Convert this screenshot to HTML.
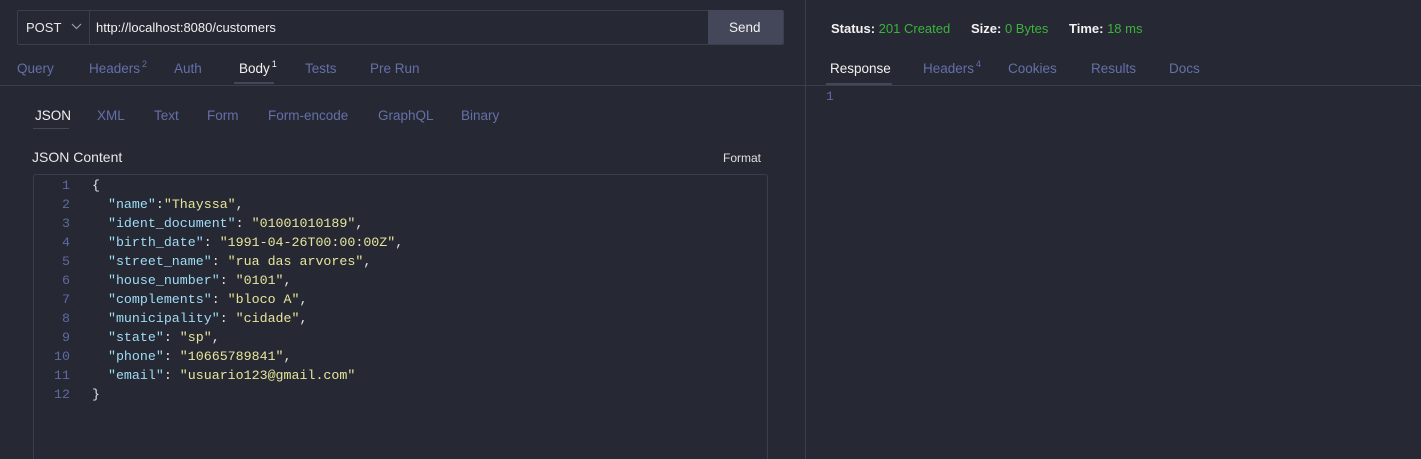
<!DOCTYPE html>
<html style="overflow:hidden;height:459px"><head><style>
body{margin:0;width:1421px;height:459px;background:#262833;font-family:"Liberation Sans",sans-serif;overflow:hidden;position:relative;color:#c5c8d4}
.a{position:absolute}
.tab{position:absolute;font-size:13.5px;color:#6470a8;top:61px;line-height:16px}
.sub{position:absolute;font-size:13.5px;color:#6470a8;top:108px}
sup{font-size:9px;vertical-align:baseline;position:relative;top:-6px;margin-left:2px;line-height:0}
.code{position:absolute;left:33px;top:174px;width:735px;height:290px;border:1px solid #3b3e4c;border-radius:3px;font-family:"Liberation Mono",monospace;font-size:13.3px;line-height:19px;box-sizing:border-box}
.ln{position:absolute;left:0;top:1px;width:36px;text-align:right;color:#5e6aa0}
.tx{position:absolute;left:58px;top:1px;white-space:pre;color:#e4e4e4}
.k{color:#9ddcf5}.s{color:#e8e59a}
</style></head><body>
<div class="a" style="left:17px;top:10px;width:765px;height:33px;border:1px solid #3b3e4c;border-radius:2px;background:#262833"></div>
<div class="a" style="left:89px;top:11px;width:1px;height:33px;background:#3b3e4c"></div>
<div class="a" style="left:26px;top:20px;font-size:13px;color:#e8e8e8">POST</div>
<svg class="a" style="left:71px;top:23px" width="11" height="7"><path d="M1 1L5.5 5.5L10 1" stroke="#9a9cab" fill="none" stroke-width="1.2"/></svg>
<div class="a" style="left:96px;top:20px;font-size:13px;color:#f0f0f0">http://localhost:8080/customers</div>
<div class="a" style="left:708px;top:10px;width:75px;height:34px;background:#444759;border-radius:0 2px 2px 0"></div>
<div class="a" style="left:729px;top:20px;font-size:13.5px;color:#f0f0f0">Send</div>
<div class="tab" style="left:17px">Query</div>
<div class="tab" style="left:89px">Headers<sup>2</sup></div>
<div class="tab" style="left:174px">Auth</div>
<div class="tab" style="left:239px;color:#f2f2f2">Body<sup>1</sup></div>
<div class="a" style="left:234px;top:82px;width:40px;height:2px;background:#444759"></div>
<div class="tab" style="left:305px">Tests</div>
<div class="tab" style="left:370px">Pre Run</div>
<div class="a" style="left:0;top:85px;width:805px;height:1px;background:#3b3e4c"></div>
<div class="a" style="left:805px;top:0;width:1px;height:459px;background:#3b3e4c"></div>
<div class="a" style="left:806px;top:85px;width:615px;height:1px;background:#3b3e4c"></div>
<div class="sub" style="left:35px;color:#f2f2f2">JSON</div>
<div class="a" style="left:33px;top:128px;width:36px;height:1px;background:#444759"></div>
<div class="sub" style="left:97px">XML</div>
<div class="sub" style="left:154px">Text</div>
<div class="sub" style="left:207px">Form</div>
<div class="sub" style="left:268px">Form-encode</div>
<div class="sub" style="left:378px">GraphQL</div>
<div class="sub" style="left:461px">Binary</div>
<div class="a" style="left:32px;top:149px;font-size:14px;color:#e8e8e8">JSON Content</div>
<div class="a" style="left:723px;top:151px;font-size:12px;color:#e0e0e0">Format</div>
<div class="code">
<div class="ln">1<br>2<br>3<br>4<br>5<br>6<br>7<br>8<br>9<br>10<br>11<br>12</div>
<div class="tx">{
  <span class="k">"name"</span>:<span class="s">"Thayssa"</span>,
  <span class="k">"ident_document"</span>: <span class="s">"01001010189"</span>,
  <span class="k">"birth_date"</span>: <span class="s">"1991-04-26T00:00:00Z"</span>,
  <span class="k">"street_name"</span>: <span class="s">"rua das arvores"</span>,
  <span class="k">"house_number"</span>: <span class="s">"0101"</span>,
  <span class="k">"complements"</span>: <span class="s">"bloco A"</span>,
  <span class="k">"municipality"</span>: <span class="s">"cidade"</span>,
  <span class="k">"state"</span>: <span class="s">"sp"</span>,
  <span class="k">"phone"</span>: <span class="s">"10665789841"</span>,
  <span class="k">"email"</span>: <span class="s">"usuario123@gmail.com"</span>
}</div>
</div>
<div class="a" style="left:831px;top:21px;font-size:13px;font-weight:bold;color:#f2f2f2">Status: <span style="color:#3cb33c;font-weight:normal">201 Created</span></div>
<div class="a" style="left:971px;top:21px;font-size:13px;font-weight:bold;color:#f2f2f2">Size: <span style="color:#3cb33c;font-weight:normal">0 Bytes</span></div>
<div class="a" style="left:1069px;top:21px;font-size:13px;font-weight:bold;color:#f2f2f2">Time: <span style="color:#3cb33c;font-weight:normal">18 ms</span></div>
<div class="tab" style="left:830px;color:#f2f2f2">Response</div>
<div class="a" style="left:826px;top:83px;width:66px;height:2px;background:#444759"></div>
<div class="tab" style="left:923px">Headers<sup>4</sup></div>
<div class="tab" style="left:1008px">Cookies</div>
<div class="tab" style="left:1091px">Results</div>
<div class="tab" style="left:1169px">Docs</div>
<div class="a" style="left:826px;top:89px;font-family:'Liberation Mono',monospace;font-size:13px;color:#5e6aa0">1</div>
</body></html>
